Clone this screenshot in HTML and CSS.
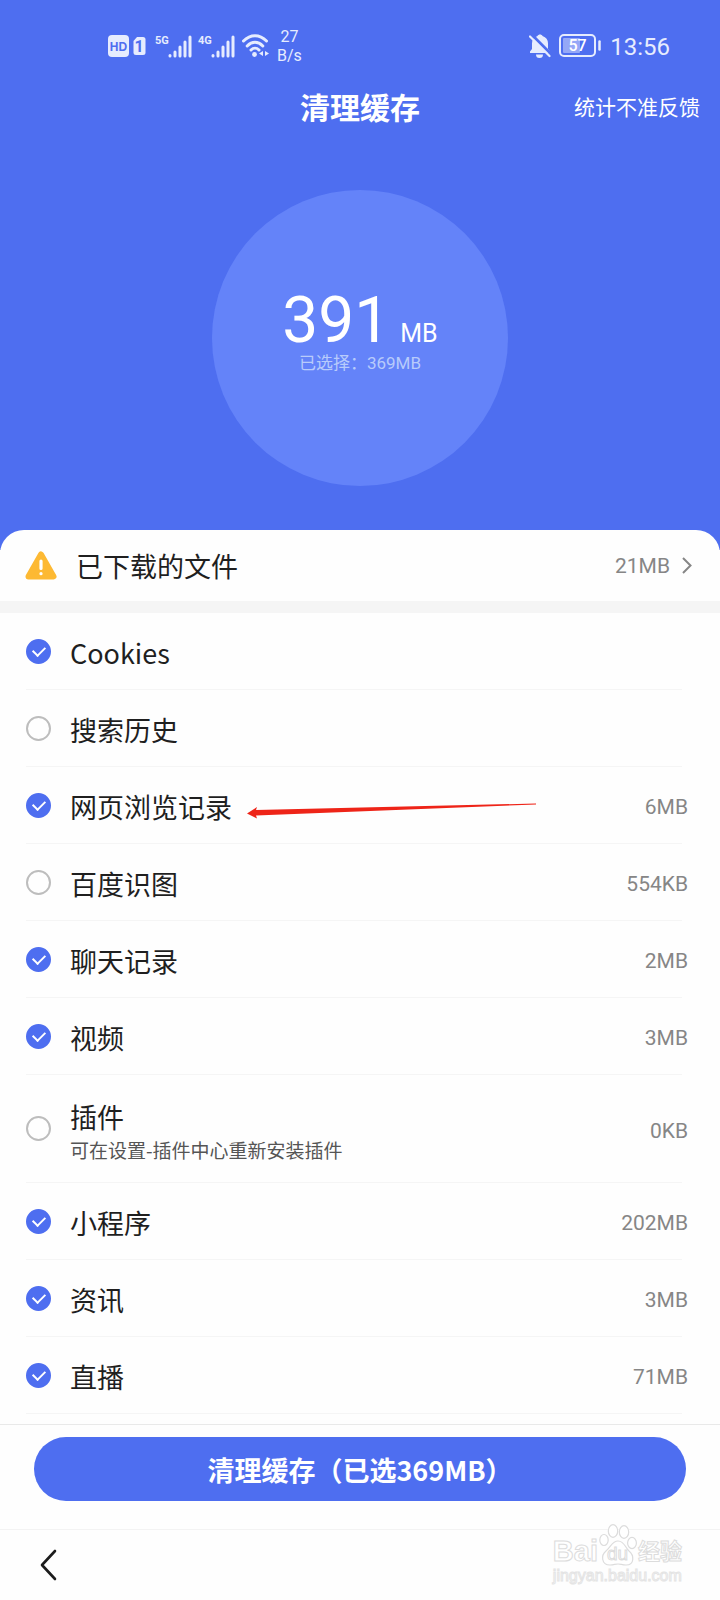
FILE: index.html
```html
<!DOCTYPE html>
<html lang="zh-CN">
<head>
<meta charset="utf-8">
<meta name="viewport" content="width=device-width, initial-scale=1">
<title>清理缓存</title>
<link rel="stylesheet" href="styles.css">
</head>
<body>
<div class="app">
  <header class="hero">
    <div class="status">
      <div class="status-side">
        <svg class="sim" width="38" height="22" viewBox="0 0 38 22" aria-hidden="true">
          <rect x="0" y="0" width="21" height="22" rx="4" fill="#e6ecfe"/>
          <text x="10.500" y="16" text-anchor="middle" class="svg-hd">HD</text>
          <path d="M29 2h6a2.500 2.500 0 0 1 2.500 2.500v13a2.500 2.500 0 0 1-2.500 2.500h-7a2.500 2.500 0 0 1-2.500-2.500V6z" fill="#e6ecfe"/>
          <text x="31" y="17" text-anchor="middle" class="svg-sim">1</text>
        </svg>
        <span class="net">5G</span>
        <svg class="signal" width="24" height="23" viewBox="0 0 24 23" stroke="#e6ecfe" stroke-width="3" stroke-linecap="round" aria-hidden="true"><path d="M2 20.500v.500M7 17v4M12 12v9M17 7v14M22 2v19"/></svg>
        <span class="net net-second">4G</span>
        <svg class="signal" width="24" height="23" viewBox="0 0 24 23" stroke="#e6ecfe" stroke-width="3" stroke-linecap="round" aria-hidden="true"><path d="M2 20.500v.500M7 17v4M12 12v9M17 7v14M22 2v19"/></svg>
        <svg class="wifi" width="27" height="24" viewBox="0 0 27 24" fill="none" stroke="#e6ecfe" stroke-width="3" stroke-linecap="round" aria-hidden="true">
          <path d="M1.500 7C8.500 0 17.500 0 24.500 7M5.200 12C10 7 16 7 20.800 12M9 16c2.500-2.500 5.500-2.500 8 0"/>
          <circle cx="12.500" cy="20.500" r="2.400" fill="#e6ecfe" stroke="none"/>
          <path d="M21 17v5l-4-2.500zM23 17v5l4-2.500z" fill="#e6ecfe" stroke="none"/>
        </svg>
        <span class="speed"><span>27</span><span>B/s</span></span>
      </div>
      <div class="status-side">
        <svg class="bell" width="22" height="24" viewBox="0 0 22 24" aria-hidden="true">
          <path d="M1 19v-1.500L3 15V9.500a8 8 0 0 1 5.500-7.500c.800-2 4.200-2 5 0a8 8 0 0 1 5.500 7.500V15l2 2.500V19zM7 20.500h7a3.500 3.500 0 0 1-7 0z" fill="#e6ecfe"/>
          <path d="M2 0l21 21" stroke="#4e6ef0" stroke-width="3"/>
          <path d="M1 2.500l19.500 19.500" stroke="#e6ecfe" stroke-width="2.200" stroke-linecap="round"/>
        </svg>
        <svg class="battery" width="43" height="24" viewBox="0 0 43 24" aria-hidden="true">
          <rect x="1" y="1" width="35" height="21" rx="4" fill="none" stroke="#e6ecfe" stroke-width="2"/>
          <rect x="4" y="4" width="17" height="15" rx="1" fill="#95a8f7"/>
          <path d="M40.500 7.500v8" stroke="#e6ecfe" stroke-width="2.500" stroke-linecap="round"/>
          <text x="18.500" y="17" text-anchor="middle" class="svg-battery">57</text>
        </svg>
        <time class="clock">13:56</time>
      </div>
    </div>
    <div class="titlebar">
      <h1 class="title">清理缓存</h1>
      <a class="feedback" href="#feedback">统计不准反馈</a>
    </div>
    <div class="gauge">
      <p class="total"><span class="total-num">391</span><span class="total-unit">MB</span></p>
      <p class="chosen">已选择：369MB</p>
    </div>
  </header>

  <main class="sheet">
    <a class="downloads" href="#downloads">
      <svg class="warn" width="32" height="29" viewBox="0 0 32 29" aria-hidden="true">
        <path d="M16 3.500L28.500 25.500h-25z" fill="#fdb933" stroke="#fdb933" stroke-width="6" stroke-linejoin="round"/>
        <path d="M16 10v7.500M16 22.500v.200" stroke="#fff" stroke-width="3.200" stroke-linecap="round"/>
      </svg>
      <span class="downloads-name">已下载的文件</span>
      <span class="size">21MB</span>
      <svg width="10" height="17" viewBox="0 0 10 17" fill="none" stroke="#868686" stroke-width="2" aria-hidden="true"><path d="M1 1l7.500 7.500L1 16"/></svg>
    </a>

    <ul class="list">
      <li><label class="row"><input class="tick" type="checkbox" checked><span class="name">Cookies</span></label></li>
      <li><label class="row"><input class="tick" type="checkbox"><span class="name">搜索历史</span></label></li>
      <li><label class="row"><input class="tick" type="checkbox" checked><span class="name">网页浏览记录</span><span class="size">6MB</span></label>
        <svg class="pointer" width="290" height="16" viewBox="0 0 290 16" aria-hidden="true"><path d="M0 10.500L10 4l-1 3L289 0.500v1L9 12.500l1 3z" fill="#ee2418"/></svg></li>
      <li><label class="row"><input class="tick" type="checkbox"><span class="name">百度识图</span><span class="size">554KB</span></label></li>
      <li><label class="row"><input class="tick" type="checkbox" checked><span class="name">聊天记录</span><span class="size">2MB</span></label></li>
      <li><label class="row"><input class="tick" type="checkbox" checked><span class="name">视频</span><span class="size">3MB</span></label></li>
      <li><label class="row row-tall"><input class="tick" type="checkbox"><span class="name">插件<small class="note">可在设置-插件中心重新安装插件</small></span><span class="size">0KB</span></label></li>
      <li><label class="row"><input class="tick" type="checkbox" checked><span class="name">小程序</span><span class="size">202MB</span></label></li>
      <li><label class="row"><input class="tick" type="checkbox" checked><span class="name">资讯</span><span class="size">3MB</span></label></li>
      <li><label class="row"><input class="tick" type="checkbox" checked><span class="name">直播</span><span class="size">71MB</span></label></li>
    </ul>
  </main>

  <div class="action"><button class="clean" type="button">清理缓存（已选369MB）</button></div>

  <nav class="toolbar">
    <button class="back" type="button" aria-label="返回"><svg width="17" height="32" viewBox="0 0 17 32" fill="none" stroke="#1c1c1c" stroke-width="2.600" stroke-linecap="round" stroke-linejoin="round" aria-hidden="true"><path d="M15 2L2 16l13 14"/></svg></button>
    <div class="watermark">
      <div class="brand">
        <span class="brand-text">Bai</span>
        <span class="paw">
          <svg width="38" height="42" viewBox="0 0 38 42" fill="#fff" stroke="#dcdcdc" stroke-width="1.200" aria-hidden="true">
            <ellipse cx="5" cy="16" rx="4.200" ry="5.500"/><ellipse cx="14" cy="7" rx="4.700" ry="6.300"/><ellipse cx="25" cy="8" rx="4.700" ry="6.300"/><ellipse cx="33" cy="19" rx="4.400" ry="5.600"/>
            <path d="M19 17c6 0 7 6 11 10 5 4 6 14-3 14-4 0-5-1-8-1s-4 1-8 1c-9 0-9-10-4-14 5-4 6-10 12-10z"/>
          </svg>
          <span class="paw-text">du</span>
        </span>
        <span class="brand-cn">经验</span>
      </div>
      <div class="site">jingyan.baidu.com</div>
    </div>
  </nav>
</div>
</body>
</html>
```

FILE: styles.css
```css
* { box-sizing: border-box; }

body {
  margin: 0;
  background: #fefefe;
  color: #1f1f1f;
  font-family: "Noto Sans CJK SC", sans-serif;
}

h1, p, ul { margin: 0; padding: 0; }
a { color: inherit; text-decoration: none; }
svg { display: block; flex: none; }

.app {
  display: flex;
  flex-direction: column;
  min-height: 100vh;
}

/* Blue header */
.hero {
  display: flex;
  flex-direction: column;
  padding: 24px 0 64px;
  background: #4e6ef0;
  color: #fff;
}

.status {
  display: flex;
  justify-content: space-between;
  align-items: center;
  height: 44px;
  padding: 0 50px 0 108px;
  color: #e6ecfe;
  font-family: Roboto, sans-serif;
}

.status-side { display: flex; align-items: center; }

.svg-hd { font: 700 12px "Liberation Sans", sans-serif; fill: #4e6ef0; }
.svg-sim { font: 700 16px Roboto, sans-serif; fill: #4e6ef0; }
.svg-battery { font: 500 16px Roboto, sans-serif; fill: #fff; }

.net {
  align-self: flex-start;
  width: 13px;
  margin: 6px 0 0 9px;
  font: 700 11px/16px Roboto, sans-serif;
}
.net-second { margin-left: 6px; }
.wifi { margin-left: 7px; }

.speed {
  display: flex;
  flex-direction: column;
  align-items: center;
  margin-left: 8px;
  font-size: 16px;
  line-height: 19px;
}

.battery { margin-left: 8px; }
.clock { margin-left: 8px; font-size: 24px; line-height: 28px; padding-top: 2px; }

.titlebar {
  display: grid;
  grid-template-columns: 1fr auto 1fr;
  align-items: center;
  height: 76px;
  padding: 0 20px;
}
.title { grid-column: 2; font-size: 30px; font-weight: 700; }
.feedback { justify-self: end; font-size: 21px; }

.gauge {
  display: flex;
  flex-direction: column;
  align-items: center;
  align-self: center;
  width: 296px;
  height: 296px;
  margin-top: 46px;
  padding-top: 99px;
  border-radius: 50%;
  background: #6483f9;
}
.total {
  display: flex;
  align-items: baseline;
  gap: 10px;
  font-family: Roboto, sans-serif;
  line-height: 1;
}
.total-num { font-size: 64px; }
.total-unit { font-size: 25px; }
.chosen {
  color: #b8cbfb;
  font: 17px/20px Roboto, "Noto Sans CJK SC", sans-serif;
}

/* White sheet over the header */
.sheet {
  margin-top: -20px;
  border-radius: 24px 24px 0 0;
  background: #fefefe;
}

.downloads {
  display: flex;
  align-items: center;
  height: 83px;
  padding: 0 28px 0 25px;
  border-bottom: 12px solid #f5f5f5;
}
.downloads-name { flex: 1; margin-left: 19px; font-size: 27px; }
.downloads .size { margin-right: 12px; }

.size {
  color: #868686;
  font: 21px/30px Roboto, sans-serif;
}

.list { list-style: none; }
.list li {
  position: relative;
  margin: 0 38px 0 26px;
  border-bottom: 1px solid #f5f5f5;
}

/* Sizes hang slightly past the end of the divider */
.row {
  display: flex;
  align-items: center;
  height: 76px;
  margin-right: -6px;
}
.row-tall { height: 107px; }
.row .name, .row .size { padding-top: 4px; }

.tick {
  display: grid;
  place-items: center;
  appearance: none;
  flex: none;
  width: 25px;
  height: 25px;
  margin: 0 19px 0 0;
  border: 2px solid #bdbdbd;
  border-radius: 50%;
}
.tick:checked { border-color: #4e6ef0; background: #4e6ef0; }
.tick:checked::after {
  content: "";
  width: 10px;
  height: 6px;
  margin-bottom: 3px;
  border: solid #fff;
  border-width: 0 0 2px 2px;
  transform: rotate(-45deg);
}

.name { flex: 1; font-size: 27px; line-height: 38px; }
.note {
  display: block;
  color: #555;
  font-size: 19px;
  line-height: 28px;
}

.pointer { position: absolute; left: 221px; top: 36px; }

/* Bottom action and navigation */
.action {
  margin-top: 10px;
  padding: 12px 34px 28px;
  border-top: 1px solid #e9e9e9;
}
.clean {
  display: block;
  width: 100%;
  height: 64px;
  border: 0;
  border-radius: 32px;
  background: #4e6ef0;
  color: #fff;
  font: 700 27px "Noto Sans CJK SC", sans-serif;
}

.toolbar {
  display: flex;
  flex: 1;
  justify-content: space-between;
  align-items: center;
  padding: 0 38px 0 40px;
  border-top: 1px solid #f3f3f3;
}
.back { padding: 0; border: 0; background: none; }

.watermark {
  color: #fff;
  font-family: "Liberation Sans", "Noto Sans CJK SC", sans-serif;
  -webkit-text-stroke: 1px #dcdcdc;
}
.brand {
  display: flex;
  align-items: flex-end;
  height: 34px;
  margin-top: -12px;
}
.brand-text { font-size: 29px; font-weight: 700; line-height: 30px; }
.paw { position: relative; margin: 0 1px; }
.paw-text {
  position: absolute;
  left: 8px;
  bottom: 2px;
  font-size: 19px;
  line-height: 20px;
}
.brand-cn { font-size: 22px; font-weight: 700; line-height: 28px; }
.site {
  font-size: 16px;
  line-height: 20px;
  -webkit-text-stroke-color: #e4e4e4;
}
```
